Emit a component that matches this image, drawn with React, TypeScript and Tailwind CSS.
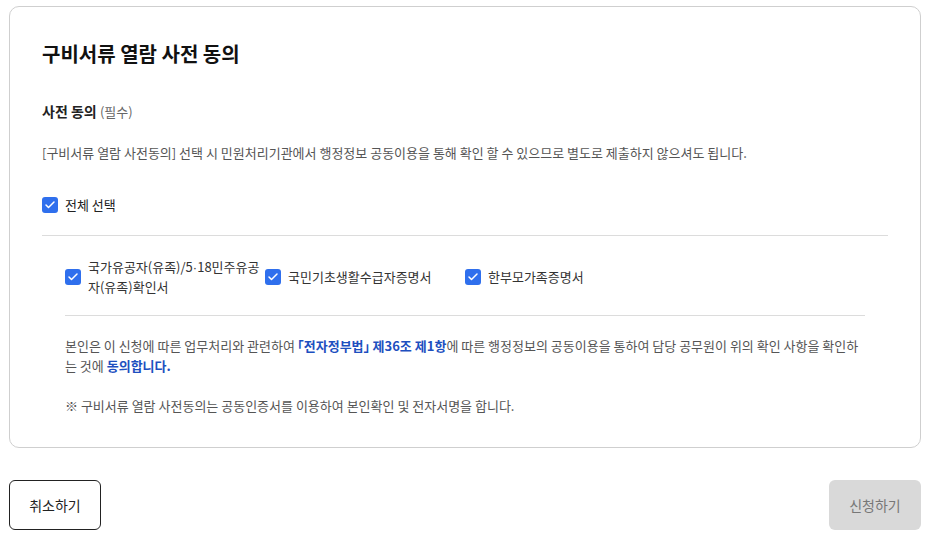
import { Check } from 'lucide-react';

const docs = [
  '국가유공자(유족)/5·18민주유공자(유족)확인서',
  '국민기초생활수급자증명서',
  '한부모가족증명서',
];

function Box() {
  return (
    <span className="w-4 h-4 rounded-[3px] bg-[#2f6fed] flex items-center justify-center flex-shrink-0">
      <Check className="w-3 h-3 text-white" strokeWidth={3} />
    </span>
  );
}

export default function App() {
  return (
    <div
      className="w-[927px] h-[542px] bg-white pl-[9px] pr-[6px] pt-[6px] text-[#222]"
      style={{ fontFamily: '"Noto Sans CJK KR", "Noto Sans", sans-serif' }}
    >
      {/* Consent card */}
      <div className="border border-[#cfcfcf] rounded-[10px] px-[32px] pt-[30px] pb-[31px]">
        <h2 className="text-[20px] font-bold leading-[34px] text-[#111]">구비서류 열람 사전 동의</h2>

        <div className="mt-[28px] text-[14px] font-bold leading-[24px]">
          사전 동의 <span className="text-[13px] font-normal text-[#666]">(필수)</span>
        </div>

        <p className="mt-[19px] text-[13px] leading-[20px] text-[#555]">
          [구비서류 열람 사전동의] 선택 시 민원처리기관에서 행정정보 공동이용을 통해 확인 할 수 있으므로 별도로 제출하지 않으셔도 됩니다.
        </p>

        <label className="mt-[32px] flex items-center gap-[7px] text-[13px] leading-[20px]">
          <Box />
          전체 선택
        </label>

        <div className="mt-[20px] border-t border-[#dcdcdc]" />

        <div className="px-[23px]">
          <div className="pt-[21px] pb-[18px] flex border-b border-[#dcdcdc]">
            {docs.map((d) => (
              <label key={d} className="w-[200px] flex items-center gap-[7px] text-[13px] leading-[20px] text-[#333]">
                <Box />
                <span className="w-[172px]">
                  {d.includes('·') ? (
                    <>
                      국가유공자(유족)/5<span className="font-['Liberation_Sans'] leading-none">·</span>18민주유공자(유족)확인서
                    </>
                  ) : (
                    d
                  )}
                </span>
              </label>
            ))}
          </div>

          <p className="mt-[20px] text-[13px] leading-[20px] text-[#555]">
            본인은 이 신청에 따른 업무처리와 관련하여{' '}
            <b className="text-[#1d4fbf]">
              <span className="-ml-[7px]">「</span>전자정부법<span className="-mr-[7px]">」</span> 제36조 제1항
            </b>
            에 따른 행정정보의 공동이용을 통하여 담당 공무원이 위의 확인 사항을 확인하는 것에{' '}
            <b className="text-[#1d4fbf]">동의합니다.</b>
          </p>

          <p className="mt-[20px] text-[13px] leading-[20px] text-[#555]">
            ※ 구비서류 열람 사전동의는 공동인증서를 이용하여 본인확인 및 전자서명을 합니다.
          </p>
        </div>
      </div>

      {/* Actions */}
      <div className="mt-[32px] flex justify-between">
        <button className="w-[92px] h-[50px] border border-[#222] rounded-[6px] text-[14px] text-[#222] bg-white">
          취소하기
        </button>
        <button className="w-[92px] h-[50px] rounded-[6px] text-[14px] text-[#777] bg-[#d9d9d9]">
          신청하기
        </button>
      </div>
    </div>
  );
}
